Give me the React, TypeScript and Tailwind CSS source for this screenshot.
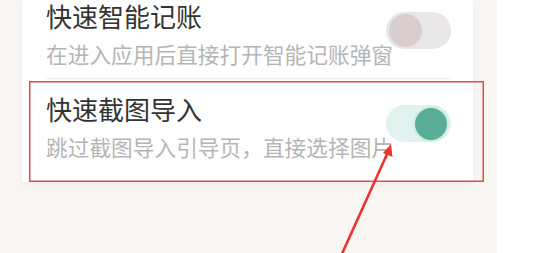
import React from "react";

function Toggle({ on }: { on: boolean }) {
  return on ? (
    <div className="relative h-[37px] w-[65px] shrink-0 rounded-full bg-[#e1f1ed]">
      <div className="absolute right-[4px] top-[3px] h-[32px] w-[32px] rounded-full bg-[#5aad98] shadow-[0_0_0_2px_#cdeee4]" />
    </div>
  ) : (
    <div className="relative h-[37px] w-[65px] shrink-0 rounded-full bg-[#e8e6e7]">
      <div className="absolute left-[3px] top-[2px] h-[33px] w-[33px] rounded-full bg-[#d8cecf]" />
    </div>
  );
}

function Item({
  title,
  desc,
  on,
  className,
}: {
  title: string;
  desc: string;
  on: boolean;
  className: string;
}) {
  return (
    <div className={"flex items-start pl-[24px] pr-[22px] " + className}>
      <div className="min-w-0 flex-1 whitespace-nowrap">
        <div className="text-[26px] leading-[30px] text-[#333333]">{title}</div>
        <div className="mt-[8px] text-[21.7px] leading-[30px] text-[#b5b5b5]">{desc}</div>
      </div>
      <div className="mt-[11px]">
        <Toggle on={on} />
      </div>
    </div>
  );
}

export default function App() {
  return (
    <div
      className="relative flex h-[253px] w-[551px] overflow-hidden bg-white"
      style={{ fontFamily: '"Noto Sans CJK SC", "Noto Sans", sans-serif' }}
    >
      <div className="h-full w-[497px] bg-[#f9f5f3] pl-[22px] pr-[24px]">
        <div className="bg-white pt-[1px] shadow-[0_3px_6px_rgba(0,0,0,0.04)]">
          <Item
            title="快速智能记账"
            desc="在进入应用后直接打开智能记账弹窗"
            on={false}
            className="pb-[9px]"
          />
          <div className="ml-[24px] mr-[22px] h-px bg-[#ececec]" />
          <Item
            title="快速截图导入"
            desc="跳过截图导入引导页，直接选择图片"
            on={true}
            className="pb-[20px] pt-[15px]"
          />
        </div>
      </div>
      <div className="pointer-events-none absolute left-[29px] top-[81px] h-[101px] w-[455px] shadow-[inset_0_0_0_1.5px_#e24a4a]" />
      <svg
        className="pointer-events-none absolute left-0 top-0"
        width="551"
        height="253"
        viewBox="0 0 551 253"
      >
        <line x1="341" y1="256" x2="388" y2="152" stroke="#e8352f" strokeWidth="2.6" strokeLinecap="round" />
        <polygon points="391,144 392.5,157 383,153" fill="#e8352f" />
      </svg>
    </div>
  );
}
